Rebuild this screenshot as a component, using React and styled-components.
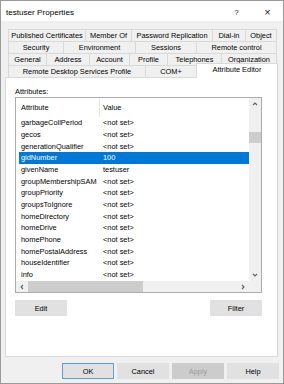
import React from 'react'
import styled, { createGlobalStyle } from 'styled-components'

const GlobalStyle = createGlobalStyle`
  html, body {
    margin: 0;
    padding: 0;
    background: #ffffff;
  }
  body {
    font-family: "Liberation Sans", Arial, sans-serif;
    color: #000;
  }
`

const tabRows = [
  [
    { label: 'Published Certificates', w: 78 },
    { label: 'Member Of', w: 46 },
    { label: 'Password Replication', w: 81 },
    { label: 'Dial-in', w: 33 },
    { label: 'Object', w: 31 },
  ],
  [
    { label: 'Security', w: 56 },
    { label: 'Environment', w: 72 },
    { label: 'Sessions', w: 61 },
    { label: 'Remote control', w: 80 },
  ],
  [
    { label: 'General', w: 39 },
    { label: 'Address', w: 43 },
    { label: 'Account', w: 40 },
    { label: 'Profile', w: 38 },
    { label: 'Telephones', w: 54 },
    { label: 'Organization', w: 55 },
  ],
  [
    { label: 'Remote Desktop Services Profile', w: 138 },
    { label: 'COM+', w: 51 },
    { label: 'Attribute Editor', w: 80, active: true },
  ],
]

const attributes = [
  ['garbageCollPeriod', '<not set>'],
  ['gecos', '<not set>'],
  ['generationQualifier', '<not set>'],
  ['gidNumber', '100', true],
  ['givenName', 'testuser'],
  ['groupMembershipSAM', '<not set>'],
  ['groupPriority', '<not set>'],
  ['groupsToIgnore', '<not set>'],
  ['homeDirectory', '<not set>'],
  ['homeDrive', '<not set>'],
  ['homePhone', '<not set>'],
  ['homePostalAddress', '<not set>'],
  ['houseIdentifier', '<not set>'],
  ['info', '<not set>'],
]

const Chevron = ({ dir }) => {
  const pts = {
    up: '1,4 3,2 5,4',
    down: '1,2 3,4 5,2',
    left: '4,1 2,3 4,5',
    right: '2,1 4,3 2,5',
  }[dir]
  return (
    <svg width="6" height="6" viewBox="0 0 6 6">
      <polyline points={pts} fill="none" stroke="#606060" strokeWidth="1.1" />
    </svg>
  )
}

const App = () => {
  return (
    <>
      <GlobalStyle />
      <Window>
        <TitleBar>
          <TitleText>testuser Properties</TitleText>
          <TitleButton $w={31}>?</TitleButton>
          <TitleButton $w={31} $big>×</TitleButton>
        </TitleBar>
        <Body>
          <TabStrip>
            {tabRows.map((row, i) => (
              <TabRow key={i}>
                {row.map((tab) => (
                  <Tab key={tab.label} $w={tab.w} $active={tab.active}>
                    {tab.label}
                  </Tab>
                ))}
              </TabRow>
            ))}
          </TabStrip>
          <Page>
            <Label>Attributes:</Label>
            <ListBox>
              <ListMain>
                <ListHeader>
                  <HeaderCell $w={84}>Attribute</HeaderCell>
                  <HeaderCell>Value</HeaderCell>
                </ListHeader>
                {attributes.map(([name, value, selected]) => (
                  <Row key={name} $selected={selected}>
                    <NameCell>{name}</NameCell>
                    <ValueCell>{value}</ValueCell>
                  </Row>
                ))}
              </ListMain>
              <VScroll>
                <ArrowBox><Chevron dir="up" /></ArrowBox>
                <VThumb />
                <ArrowBox $bottom><Chevron dir="down" /></ArrowBox>
              </VScroll>
              <HScroll>
                <ArrowBox $h><Chevron dir="left" /></ArrowBox>
                <HThumb />
                <ArrowBox $h $right><Chevron dir="right" /></ArrowBox>
              </HScroll>
            </ListBox>
            <ButtonRow>
              <Button>Edit</Button>
              <Button>Filter</Button>
            </ButtonRow>
          </Page>
        </Body>
        <Footer>
          <Button $default>OK</Button>
          <Button>Cancel</Button>
          <Button $disabled>Apply</Button>
          <Button>Help</Button>
        </Footer>
      </Window>
    </>
  )
}

const Window = styled.div`
  width: 284px;
  height: 384px;
  box-sizing: border-box;
  border: 1px solid #9a9a9a;
  background: #f0f0f0;
  display: flex;
  flex-direction: column;
  font-size: 7.4px;
  color: #000;
`

const TitleBar = styled.div`
  height: 20px;
  background: #ffffff;
  display: flex;
  align-items: center;
  padding-left: 5px;
`

const TitleText = styled.div`
  flex: 1;
  font-size: 8.1px;
  padding-top: 2px;
`

const TitleButton = styled.div`
  width: ${(p) => p.$w}px;
  text-align: center;
  font-size: ${(p) => (p.$big ? '11px' : '8px')};
  color: #222;
  padding-top: 2px;
`

const Body = styled.div`
  padding: 8px 5px 0 4px;
`

const TabStrip = styled.div`
  padding: 0 1px 0 3px;
`

const TabRow = styled.div`
  display: flex;
  height: 12px;
`

const Tab = styled.div`
  box-sizing: border-box;
  width: ${(p) => p.$w}px;
  height: 12px;
  line-height: 11px;
  text-align: center;
  white-space: nowrap;
  border-top: 1px solid #d9d9d9;
  border-right: 1px solid #d9d9d9;
  background: #f0f0f0;

  &:first-child {
    border-left: 1px solid #d9d9d9;
  }

  ${(p) =>
    p.$active &&
    `
    position: relative;
    z-index: 1;
    width: ${p.$w + 2}px;
    height: 15px;
    margin: -2px -1px 0 -1px;
    background: #ffffff;
    border-left: 1px solid #d9d9d9;
    line-height: 12px;
  `}
`

const Page = styled.div`
  height: 280px;
  box-sizing: border-box;
  background: #ffffff;
  border: 1px solid #d9d9d9;
  padding: 9px 0 0 9px;
`

const Label = styled.div`
  height: 10px;
  line-height: 9px;
`

const ListBox = styled.div`
  width: 247px;
  height: 196px;
  box-sizing: border-box;
  border: 1px solid #acacac;
  display: grid;
  grid-template-columns: 233px 12px;
  grid-template-rows: 183px 11px;
  overflow: hidden;
  background: #ffffff;
`

const ListMain = styled.div`
  overflow: hidden;
  background: #ffffff;
`

const ListHeader = styled.div`
  height: 19px;
  display: flex;
  align-items: center;
  color: #000;
`

const HeaderCell = styled.div`
  box-sizing: border-box;
  height: 100%;
  display: flex;
  align-items: center;
  padding-left: ${(p) => (p.$w ? '5px' : '3px')};
  width: ${(p) => (p.$w ? `${p.$w}px` : 'auto')};
  border-right: ${(p) => (p.$w ? '1px solid #e5e5e5' : 'none')};
`

const Row = styled.div`
  height: 12px;
  line-height: 12px;
  margin-left: 3px;
  padding-left: 2px;
  display: flex;
  white-space: nowrap;
  background: ${(p) => (p.$selected ? '#0078d7' : '#ffffff')};
  color: ${(p) => (p.$selected ? '#ffffff' : '#000000')};

  &:nth-child(3n + 1) {
    height: 11px;
    line-height: 11px;
  }
`

const NameCell = styled.span`
  width: 82px;
  flex-shrink: 0;
`

const ValueCell = styled.span``

const VScroll = styled.div`
  grid-row: 1 / span 2;
  grid-column: 2;
  background: #f0f0f0;
  display: flex;
  flex-direction: column;
  align-items: stretch;
`

const ArrowBox = styled.div`
  width: ${(p) => (p.$h ? '12px' : '100%')};
  height: ${(p) => (p.$h ? '100%' : '12px')};
  display: flex;
  align-items: center;
  justify-content: center;
  margin-top: ${(p) => (p.$bottom ? 'auto' : '0')};
  margin-bottom: ${(p) => (p.$bottom ? '11px' : '0')};
  margin-left: ${(p) => (p.$right ? 'auto' : '0')};
`

const VThumb = styled.div`
  height: 11px;
  margin-top: 22px;
  background: #cdcdcd;
`

const HScroll = styled.div`
  grid-row: 2;
  grid-column: 1;
  background: #f0f0f0;
  display: flex;
  align-items: stretch;
`

const HThumb = styled.div`
  width: 115px;
  background: #cdcdcd;
`

const ButtonRow = styled.div`
  width: 247px;
  display: flex;
  justify-content: space-between;
  margin-top: 7px;
`

const Button = styled.div`
  box-sizing: border-box;
  width: 52px;
  height: 16px;
  display: flex;
  align-items: center;
  justify-content: center;
  background: ${(p) => (p.$disabled ? '#cccccc' : '#e1e1e1')};
  color: ${(p) => (p.$disabled ? '#9a9a9a' : '#000')};
  border: 1px solid ${(p) => (p.$default ? '#5aa0dc' : p.$disabled ? '#cccccc' : '#e1e1e1')};
`

const Footer = styled.div`
  display: flex;
  justify-content: flex-end;
  gap: 3px;
  padding: 6px 4px 0 0;
`

export default App
